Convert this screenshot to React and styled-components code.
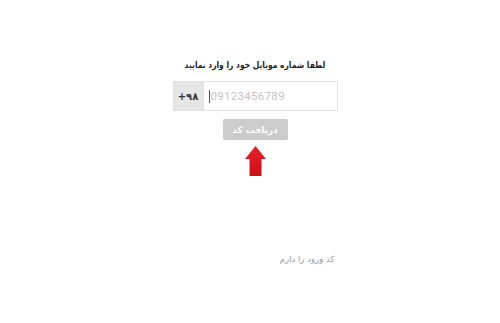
import styled, { createGlobalStyle } from "styled-components";

const GlobalStyle = createGlobalStyle`
  html, body {
    margin: 0;
    padding: 0;
    background: #ffffff;
    font-family: "DejaVu Sans", "Noto Sans", sans-serif;
  }
`;

const Page = styled.div`
  width: 500px;
  height: 323px;
  display: flex;
  justify-content: center;
  padding: 59px 0 0 10px;
  box-sizing: border-box;
`;

const Column = styled.div`
  width: 165px;
  display: flex;
  flex-direction: column;
  align-items: center;
  direction: rtl;
`;

const Title = styled.div`
  font-size: 8.6px;
  font-weight: bold;
  color: #222;
  line-height: 12px;
  white-space: nowrap;
  transform: scaleX(0.88);
`;

const InputGroup = styled.div`
  margin-top: 10px;
  width: 165px;
  height: 30px;
  display: flex;
  direction: ltr;
`;

const Prefix = styled.div`
  width: 30px;
  background: #e6e6e6;
  border: 1px solid #e0e0e0;
  border-right: none;
  display: flex;
  align-items: center;
  justify-content: center;
  font-size: 10px;
  font-weight: bold;
  color: #333;
  box-sizing: border-box;
`;

const Field = styled.div`
  flex: 1;
  border: 1px solid #e3e3e3;
  display: flex;
  align-items: center;
  padding-left: 5px;
  box-sizing: border-box;
  font-family: "Roboto", "DejaVu Sans", sans-serif;
  font-size: 11.5px;
  color: #c4c4c4;
  letter-spacing: 0.3px;
`;

const Caret = styled.span`
  display: inline-block;
  width: 1px;
  height: 13px;
  background: #555;
  margin-right: 1px;
`;

const SendButton = styled.button`
  margin-top: 8px;
  width: 65px;
  height: 21px;
  border: none;
  border-radius: 2px;
  background: #cccccc;
  color: #fff;
  font-family: "DejaVu Sans", sans-serif;
  font-size: 9px;
  font-weight: bold;
  padding: 0;
`;

const Arrow = styled.svg`
  margin-top: 6px;
  display: block;
`;

const HaveCode = styled.div`
  margin-top: 78px;
  align-self: flex-start;
  font-size: 8.5px;
  color: #9a9a9a;
  padding-right: 3px;
`;

export default function App() {
  return (
    <>
      <GlobalStyle />
      <Page>
        <Column>
          <Title>لطفا شماره موبایل خود را وارد نمایید</Title>
          <InputGroup>
            <Prefix>+۹۸</Prefix>
            <Field>
              <Caret />
              09123456789
            </Field>
          </InputGroup>
          <SendButton>دریافت کد</SendButton>
          <Arrow width="21" height="30" viewBox="0 0 21 30">
            <defs>
              <linearGradient id="ag" x1="0" y1="0" x2="0" y2="1">
                <stop offset="0" stopColor="#e8202a" />
                <stop offset="1" stopColor="#c8101c" />
              </linearGradient>
            </defs>
            <path d="M10.5 0 L21 13 L16.5 13 L16.5 30 L4.5 30 L4.5 13 L0 13 Z" fill="url(#ag)" />
          </Arrow>
          <HaveCode>کد ورود را دارم</HaveCode>
        </Column>
      </Page>
    </>
  );
}
